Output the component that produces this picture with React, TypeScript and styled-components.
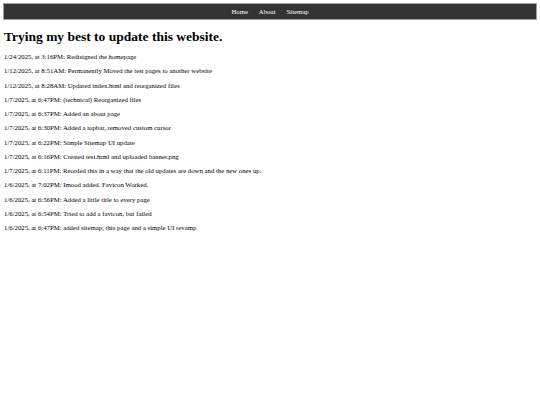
import styled, { createGlobalStyle } from "styled-components";

const GlobalStyle = createGlobalStyle`
  body {
    margin: 3px;
    font-family: "Liberation Serif", "Times New Roman", serif;
    background: #ffffff;
    color: #000000;
  }
`

const TopBar = styled.nav`
  display: flex;
  justify-content: center;
  gap: 11px;
  height: 15px;
  align-items: center;
  background: #333333;
  border: 1px solid #a0a0a0;
`

const NavLink = styled.a`
  color: #ffffff;
  font-size: 6.7px;
  text-decoration: none;
`

const Content = styled.main`
  padding: 0 1px;
`

const Title = styled.h1`
  font-size: 13.5px;
  font-weight: bold;
  margin: 9px 0 5px;
`

const UpdateList = styled.div`
  display: flex;
  flex-direction: column;
`

const Update = styled.p`
  font-size: 6.75px;
  line-height: 14.25px;
  margin: 0;
`

const updates = [
  "1/24/2025, at 3:16PM: Redisigned the homepage",
  "1/12/2025, at 8:51AM: Permanently Moved the test pages to another website",
  "1/12/2025, at 8:28AM: Updated index.html and reorganized files",
  "1/7/2025, at 6:47PM: (technical) Reorganized files",
  "1/7/2025, at 6:37PM: Added an about page",
  "1/7/2025, at 6:30PM: Added a topbar, removed custom cursor",
  "1/7/2025, at 6:22PM: Simple Sitemap UI update",
  "1/7/2025, at 6:16PM: Created test.html and uploaded banner.png",
  "1/7/2025, at 6:11PM: Reorded this in a way that the old updates are down and the new ones up.",
  "1/6/2025, at 7:02PM: Imood added. Favicon Worked.",
  "1/6/2025, at 6:56PM: Added a little title to every page",
  "1/6/2025, at 6:54PM: Tried to add a favicon, but failed",
  "1/6/2025, at 6:47PM: added sitemap; this page and a simple UI revamp",
]

function App() {
  return (
    <>
      <GlobalStyle />
      <TopBar>
        <NavLink href="#">Home</NavLink>
        <NavLink href="#">About</NavLink>
        <NavLink href="#">Sitemap</NavLink>
      </TopBar>
      <Content>
        <Title>Trying my best to update this website.</Title>
        <UpdateList>
          {updates.map(u => (
            <Update key={u}>{u}</Update>
          ))}
        </UpdateList>
      </Content>
    </>
  )
}

export default App
